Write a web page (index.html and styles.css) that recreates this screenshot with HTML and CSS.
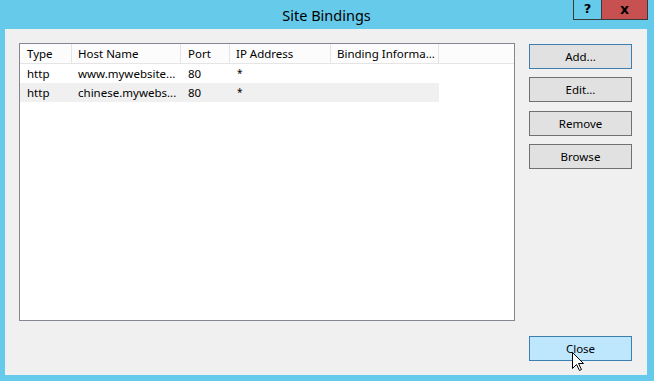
FILE: index.html
```html
<!DOCTYPE html>
<html lang="en">
<head>
  <meta charset="UTF-8">
  <meta name="viewport" content="width=device-width, initial-scale=1.0">
  <title>Site Bindings</title>
  <link rel="stylesheet" href="styles.css">
</head>
<body>
  <div class="window">
    <!-- title bar -->
    <div class="titlebar">
      <div class="title">Site Bindings</div>
      <div class="caption-buttons">
        <div class="cap-btn cap-help">?</div>
        <div class="cap-btn cap-close">x</div>
      </div>
    </div>

    <!-- client area -->
    <div class="client">
      <div class="listview">
        <div class="lv-header">
          <div class="lv-col">Type</div>
          <div class="lv-col">Host Name</div>
          <div class="lv-col">Port</div>
          <div class="lv-col">IP Address</div>
          <div class="lv-col">Binding Informa...</div>
          <div class="lv-filler"></div>
        </div>
        <div class="lv-row">
          <div class="lv-cell">http</div>
          <div class="lv-cell">www.mywebsite...</div>
          <div class="lv-cell">80</div>
          <div class="lv-cell lv-star">*</div>
          <div class="lv-cell"></div>
        </div>
        <div class="lv-row lv-alt">
          <div class="lv-cell">http</div>
          <div class="lv-cell">chinese.mywebs...</div>
          <div class="lv-cell">80</div>
          <div class="lv-cell lv-star">*</div>
          <div class="lv-cell"></div>
        </div>
      </div>

      <div class="side">
        <div class="side-top">
          <button class="btn btn-default">Add...</button>
          <button class="btn">Edit...</button>
          <button class="btn btn-remove">Remove</button>
          <button class="btn">Browse</button>
        </div>
        <div class="close-wrap">
          <button class="btn btn-hover">Close</button>
          <!-- mouse cursor -->
          <svg class="cursor" width="12" height="20" viewBox="0 0 12 20">
            <path d="M0.5 0.5 L0.5 16.5 L4.5 12.5 L7.5 18.5 L9.5 17.5 L6.5 11.5 L11.5 11.5 Z" fill="#fff" stroke="#000" stroke-width="1"/>
          </svg>
        </div>
      </div>
    </div>
  </div>
</body>
</html>
```

FILE: styles.css
```css
/* window frame */
body {
  margin: 0;
  background-color: #66caea;
  font-family: 'Noto Sans', 'Open Sans', sans-serif;
  font-size: 11.5px;
  color: #000;
  overflow: hidden;
}

.window {
  width: 654px;
  height: 381px;
  display: flex;
  flex-direction: column;
}

/* title bar */
.titlebar {
  height: 29px;
  display: flex;
  align-items: flex-start;
}

.title {
  flex: 1;
  padding-left: 80px;
  padding-top: 5px;
  text-align: center;
  font-size: 14.5px;
  line-height: 20px;
}

.caption-buttons {
  display: flex;
  margin-right: 6px;
  border: 1px solid #3a3a3a;
  border-top: none;
}

.cap-btn {
  height: 19px;
  line-height: 18px;
  text-align: center;
  font-family: 'DejaVu Sans', sans-serif;
  font-weight: bold;
  font-size: 13px;
}

.cap-help {
  width: 27px;
  border-right: 1px solid #3a3a3a;
}

.cap-close {
  width: 45px;
  background-color: #c75050;
  font-size: 14px;
}

/* client area */
.client {
  margin: 0 7px 6px 5px;
  flex: 1;
  background-color: #f0f0f0;
  display: flex;
  padding: 14px 15px 14px 14px;
}

/* list view */
.listview {
  width: 494px;
  height: 276px;
  border: 1px solid #828790;
  background-color: #fff;
}

.lv-header {
  display: flex;
  height: 19px;
  border-bottom: 1px solid #e5e5e5;
  background-color: #fcfcfc;
}

.lv-col {
  border-right: 1px solid #e5e5e5;
  padding-left: 6px;
  line-height: 19px;
  white-space: nowrap;
  overflow: hidden;
}

.lv-col:nth-child(1) { width: 44px; padding-left: 7px; }
.lv-col:nth-child(2) { width: 102px; }
.lv-col:nth-child(3) { width: 41px; padding-left: 7px; }
.lv-col:nth-child(4) { width: 94px; padding-left: 6px; }
.lv-col:nth-child(5) { width: 101px; }

.lv-filler {
  flex: 1;
}

.lv-row {
  display: flex;
  width: 419px;
  height: 19px;
}

.lv-alt {
  background-color: #f0f0f0;
}

.lv-cell {
  line-height: 19px;
  padding-left: 6px;
  white-space: nowrap;
  overflow: hidden;
}

.lv-cell:nth-child(1) { width: 45px; padding-left: 7px; }
.lv-cell:nth-child(2) { width: 103px; }
.lv-cell:nth-child(3) { width: 42px; padding-left: 7px; }
.lv-cell:nth-child(4) { width: 94px; padding-left: 7px; }
.lv-cell:nth-child(5) { width: 102px; }

.lv-star {
  font-size: 10px;
}

/* buttons column */
.side {
  margin-left: 14px;
  width: 103px;
  display: flex;
  flex-direction: column;
  justify-content: space-between;
}

.side-top {
  padding-top: 1px;
  display: flex;
  flex-direction: column;
  gap: 8px;
}

.btn {
  width: 103px;
  height: 25px;
  margin: 0;
  padding: 0;
  background-color: #e1e1e1;
  border: 1px solid #707070;
  font-family: 'Noto Sans', 'Open Sans', sans-serif;
  font-size: 11.5px;
  color: #000;
}

.btn-default {
  border-color: #3c7fb1;
}

.btn-remove {
  margin-top: 1px;
}

.btn-hover {
  background-color: #bee6fd;
  border-color: #3c7fb1;
}

.close-wrap {
  position: relative;
  height: 25px;
}

.cursor {
  position: absolute;
  left: 43px;
  top: 16px;
}
```
